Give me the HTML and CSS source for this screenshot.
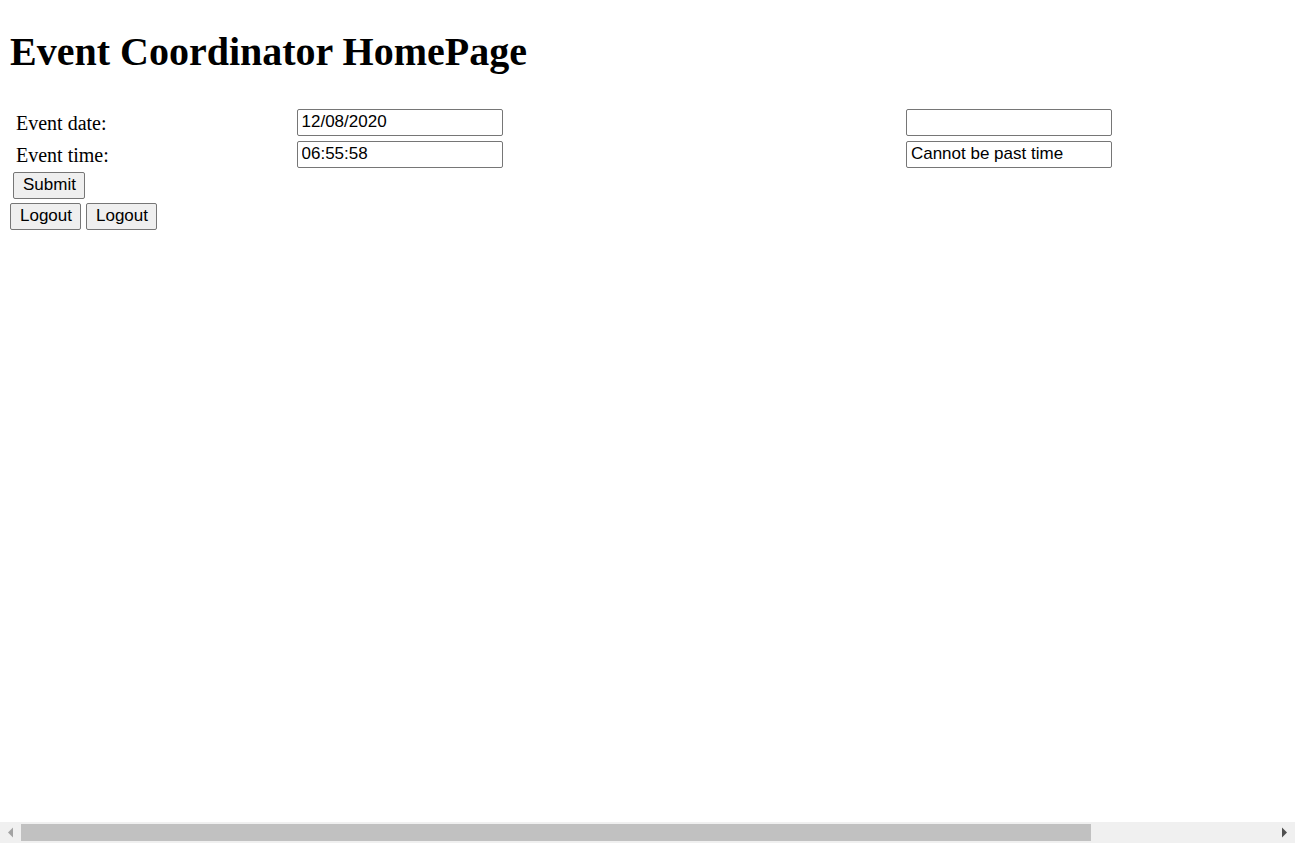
FILE: index.html
```html
<!DOCTYPE html>
<html lang="en">
<head>
<meta charset="utf-8">
<title>Event Coordinator HomePage</title>
<link rel="stylesheet" href="styles.css">
</head>
<body>
<main class="page">
  <h1 class="title">Event Coordinator HomePage</h1>
  <form class="event-form">
    <table class="fields">
      <colgroup><col class="col-label"><col class="col-value"><col></colgroup>
      <tbody>
        <tr>
          <td><label class="label" for="date">Event date:</label></td>
          <td><input class="field" id="date" type="text" value="12/08/2020"></td>
          <td><input class="field" type="text" aria-label="Event date error"></td>
        </tr>
        <tr>
          <td><label class="label" for="time">Event time:</label></td>
          <td><input class="field" id="time" type="text" value="06:55:58"></td>
          <td><input class="field" type="text" aria-label="Event time error" value="Cannot be past time"></td>
        </tr>
      </tbody>
    </table>
    <button class="btn submit" type="submit">Submit</button>
  </form>
  <div class="actions">
    <button class="btn" type="button">Logout</button>
    <button class="btn" type="button">Logout</button>
  </div>
</main>
<div class="scrollbar">
  <svg class="arrow arrow-left" viewBox="0 0 21 21" aria-hidden="true"><path d="M8 10.500L13 5.500V15.500Z"/></svg>
  <div class="track"><div class="thumb"></div></div>
  <svg class="arrow arrow-right" viewBox="0 0 21 21" aria-hidden="true"><path d="M13 10.500L8 5.500V15.500Z"/></svg>
</div>
</body>
</html>
```
FILE: styles.css
```css
body {
  margin: 0;
  min-height: 100vh;
  display: flex;
  flex-direction: column;
  background: #fff;
  color: #000;
  font: 20px/24px "Liberation Serif", "Times New Roman", serif;
}

.page {
  flex: 1;
  padding: 28px 10px 10px;
}

.title {
  margin: 0 0 30px;
  font-size: 40px;
  line-height: 48px;
  font-weight: bold;
}

.fields {
  width: 100%;
  table-layout: fixed;
  border-collapse: collapse;
}

.fields td {
  height: 32px;
  padding: 0 0 0 6px;
  vertical-align: middle;
}

.col-label {
  width: 22%;
}

.col-value {
  width: 47.8%;
}

.label {
  display: block;
  line-height: 24px;
  padding-top: 2px;
}

.field {
  display: block;
  box-sizing: border-box;
  width: 206px;
  height: 27px;
  margin: 0;
  padding: 0 4px;
  border: 1px solid #767676;
  border-radius: 2px;
  background: #fff;
  color: #000;
  font: 17px/20px "Liberation Sans", Arial, sans-serif;
}

.btn {
  display: block;
  box-sizing: border-box;
  height: 27px;
  margin: 0;
  padding: 0 8px 2px 9px;
  border: 1px solid #767676;
  border-radius: 2px;
  background: #efefef;
  color: #000;
  font: 17px/20px "Liberation Sans", Arial, sans-serif;
}

.submit {
  margin: 2px 0 0 3px;
}

.actions {
  display: flex;
  gap: 5px;
  margin-top: 4px;
}

.scrollbar {
  display: flex;
  height: 21px;
  background: #f0f0f0;
}

.arrow {
  width: 21px;
  height: 21px;
}

.arrow-left {
  fill: #a3a3a3;
}

.arrow-right {
  fill: #505050;
}

.track {
  flex: 1;
  padding: 2px 0;
}

.thumb {
  width: 85.4%;
  height: 17px;
  background: #c1c1c1;
}
```
